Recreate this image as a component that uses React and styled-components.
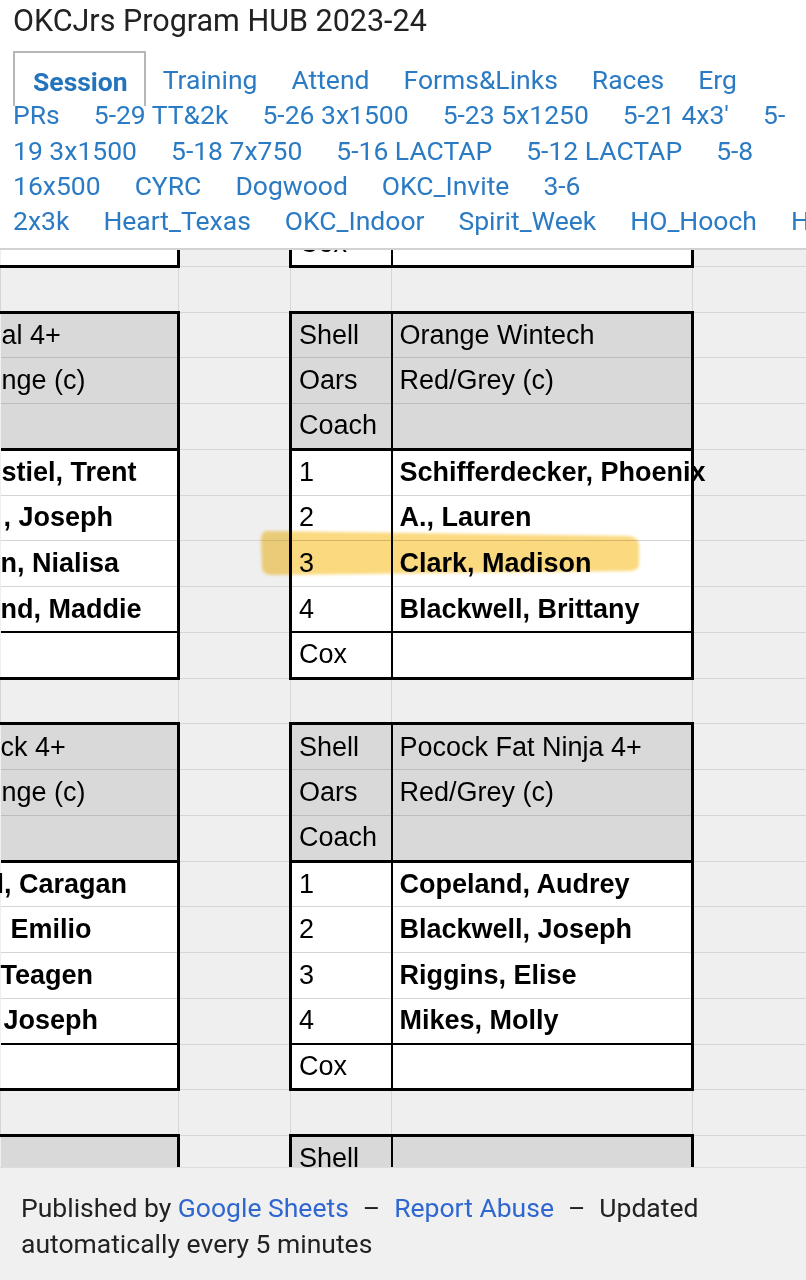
import React from 'react';
import styled, { createGlobalStyle } from 'styled-components';

const GlobalStyle = createGlobalStyle`
  html, body {
    margin: 0;
    padding: 0;
    background: #fff;
    overflow: hidden;
  }
`;

const tabLines = [
  [
    { t: 'Session', active: true },
    { t: 'Training' },
    { t: 'Attend' },
    { t: 'Forms&Links' },
    { t: 'Races' },
    { t: 'Erg' },
  ],
  [
    { t: 'PRs', cont: true },
    { t: '5-29 TT&2k' },
    { t: '5-26 3x1500' },
    { t: '5-23 5x1250' },
    { t: "5-21 4x3'" },
    { t: '5-' },
  ],
  [
    { t: '19 3x1500', cont: true },
    { t: '5-18 7x750' },
    { t: '5-16 LACTAP' },
    { t: '5-12 LACTAP' },
    { t: '5-8' },
  ],
  [
    { t: '16x500', cont: true },
    { t: 'CYRC' },
    { t: 'Dogwood' },
    { t: 'OKC_Invite' },
    { t: '3-6' },
  ],
  [
    { t: '2x3k', cont: true },
    { t: 'Heart_Texas' },
    { t: 'OKC_Indoor' },
    { t: 'Spirit_Week' },
    { t: 'HO_Hooch' },
    { t: 'HOCR' },
  ],
];

// sheet rows, top one is the tail of the previous boat
const rows = [
  { kind: 'cox', c: 'Cox', partial: true },
  { kind: 'gap' },
  { kind: 'shell', a: 'al 4+', ai: 1, c: 'Shell', d: 'Orange Wintech' },
  { kind: 'oars', a: 'nge (c)', ai: 1, c: 'Oars', d: 'Red/Grey (c)' },
  { kind: 'coach', c: 'Coach' },
  { kind: 'seat', a: 'stiel, Trent', ai: 1, c: '1', d: 'Schifferdecker, Phoenix' },
  { kind: 'seat', a: ', Joseph', ai: 3, c: '2', d: 'A., Lauren' },
  { kind: 'seat', a: 'n, Nialisa', ai: 0, c: '3', d: 'Clark, Madison' },
  { kind: 'seat', a: 'nd, Maddie', ai: 0, c: '4', d: 'Blackwell, Brittany' },
  { kind: 'cox', c: 'Cox' },
  { kind: 'gap' },
  { kind: 'shell', a: 'ck 4+', ai: 0, c: 'Shell', d: 'Pocock Fat Ninja 4+' },
  { kind: 'oars', a: 'nge (c)', ai: 1, c: 'Oars', d: 'Red/Grey (c)' },
  { kind: 'coach', c: 'Coach' },
  { kind: 'seat', a: 'l, Caragan', ai: -4, c: '1', d: 'Copeland, Audrey' },
  { kind: 'seat', a: 'Emilio', ai: 10, c: '2', d: 'Blackwell, Joseph' },
  { kind: 'seat', a: 'Teagen', ai: 0, c: '3', d: 'Riggins, Elise' },
  { kind: 'seat', a: 'Joseph', ai: 3, c: '4', d: 'Mikes, Molly' },
  { kind: 'cox', c: 'Cox' },
  { kind: 'gap' },
  { kind: 'shell', c: 'Shell' },
  { kind: 'oars', c: 'Oars' },
];

const HEAD = ['shell', 'oars', 'coach'];

const App = () => {
  const blockCell = (row, col) => {
    const fill = HEAD.includes(row.kind) ? 'head' : 'white';
    return {
      $fill: fill,
      $top: row.kind === 'shell' ? 'thick' : row.kind === 'cox' ? 'black' : null,
      $bottom: row.kind === 'coach' || row.kind === 'cox' ? 'thick' : null,
      $left: col === 'c' ? 'thick' : null,
      $right: col === 'c' ? 'black' : 'thick',
      $bold: row.kind === 'seat' && col !== 'c',
    };
  };

  return (
    <Page>
      <GlobalStyle />
      <Title>OKCJrs Program HUB 2023-24</Title>

      <Tabs>
        {tabLines.map((line, i) => (
          <TabLine key={i}>
            {line.map((tab) =>
              tab.active ? (
                <ActiveTab key={tab.t}>{tab.t}</ActiveTab>
              ) : (
                <Tab key={tab.t} $cont={tab.cont}>{tab.t}</Tab>
              )
            )}
          </TabLine>
        ))}
      </Tabs>

      <SheetView>
        <Grid>
          <colgroup>
            <Col $w={178} />
            <Col $w={112} />
            <Col $w={101} />
            <Col $w={301} />
            <Col $w={130} />
          </colgroup>
          <tbody>
            {rows.map((row, i) => (
              <Row key={i}>
                {row.kind === 'gap' ? (
                  <>
                    <Cell $fill="gap" />
                    <Cell $fill="gap" />
                    <Cell $fill="gap" />
                    <Cell $fill="gap" />
                    <Cell $fill="gap" />
                  </>
                ) : (
                  <>
                    <Cell {...blockCell(row, 'a')} $edge $indent={row.ai || 0}>{row.a}</Cell>
                    <Cell $fill="gap" />
                    <Cell {...blockCell(row, 'c')}>{row.c}</Cell>
                    <Cell {...blockCell(row, 'd')}>{row.d}</Cell>
                    <Cell $fill="gap" />
                  </>
                )}
              </Row>
            ))}
          </tbody>
        </Grid>

        <Marker viewBox="0 0 392 50" width="392" height="50">
          <defs>
            <filter id="soft" x="-5%" y="-20%" width="110%" height="140%">
              <feGaussianBlur stdDeviation="1.4" />
            </filter>
          </defs>
          <path
            d="M9 2 L370 7 Q381 8 381 16 L381 35 Q381 42 371 42 L14 46 Q5 46 4 39 L3 11 Q3 2 9 2 Z"
            fill="#fad97f"
            filter="url(#soft)"
          />
        </Marker>
      </SheetView>

      <Footer>
        Published by <FooterLink>Google Sheets</FooterLink>
        <Dash>–</Dash>
        <FooterLink>Report Abuse</FooterLink>
        <Dash>–</Dash>
        Updated automatically every 5 minutes
      </Footer>
    </Page>
  );
};

export default App;

const Page = styled.div`
  width: 806px;
  height: 1280px;
  display: flex;
  flex-direction: column;
  overflow: hidden;
  font-family: Roboto, 'Noto Sans', sans-serif;
`;

const Title = styled.div`
  height: 42px;
  line-height: 42px;
  padding-left: 13px;
  font-size: 30.5px;
  color: #222;
  white-space: nowrap;
`;

const Tabs = styled.nav`
  box-sizing: border-box;
  height: 208px;
  padding: 20px 0 0 13px;
  border-bottom: 2px solid #d2d2d2;
  flex-shrink: 0;
  overflow: hidden;
`;

const TabLine = styled.div`
  display: flex;
  align-items: flex-start;
  height: 35.25px;
  white-space: nowrap;
`;

const Tab = styled.span`
  padding: 0 17px 0 ${(p) => (p.$cont ? '0' : '17px')};
  font-size: 26.5px;
  line-height: 35.25px;
  color: #2b7bc4;
`;

const ActiveTab = styled.span`
  box-sizing: border-box;
  height: 55px;
  margin-top: -11px;
  padding: 11px 16px 0 18px;
  border: 2px solid #b7b7b7;
  border-bottom: none;
  font-size: 26.5px;
  font-weight: 700;
  line-height: 35.25px;
  color: #2474bd;
  position: relative;
  z-index: 1;
`;

const SheetView = styled.div`
  position: relative;
  flex: 1 1 auto;
  overflow: hidden;
  background: #efefef;
`;

const Grid = styled.table`
  border-collapse: collapse;
  table-layout: fixed;
  width: 822px;
  margin-top: -30.5px;
  font-family: 'Liberation Sans', Arial, sans-serif;
  font-size: 27px;
  color: #000;
`;

const Col = styled.col`
  width: ${(p) => p.$w}px;
`;

const Row = styled.tr`
  height: 45.75px;
`;

const line = (v, fill) => {
  if (v === 'thick') return '3px solid #000';
  if (v === 'black') return '2px solid #000';
  if (fill === 'head') return '1px solid #bdbdbd';
  if (fill === 'white') return '1px solid #d5d5d5';
  return '1px solid #d6d6d6';
};

const Cell = styled.td`
  box-sizing: border-box;
  padding: 0 0 0 ${(p) => (p.$edge ? 0 : 7)}px;
  text-indent: ${(p) => p.$indent || 0}px;
  white-space: nowrap;
  overflow: visible;
  vertical-align: middle;
  line-height: 31px;
  font-weight: ${(p) => (p.$bold ? 700 : 400)};
  background: ${(p) => (p.$fill === 'head' ? '#d9d9d9' : p.$fill === 'white' ? '#fff' : '#efefef')};
  border-top: ${(p) => line(p.$top, p.$fill)};
  border-bottom: ${(p) => line(p.$bottom, p.$fill)};
  border-left: ${(p) => (p.$edge ? 'none' : line(p.$left, p.$fill))};
  border-right: ${(p) => line(p.$right, p.$fill)};
`;

const Marker = styled.svg`
  position: absolute;
  left: 258px;
  top: 279px;
  mix-blend-mode: multiply;
  pointer-events: none;
`;

const Footer = styled.footer`
  box-sizing: border-box;
  height: 113px;
  flex-shrink: 0;
  padding: 22px 21px 0 21px;
  background: #f0f0f0;
  border-top: 1px solid #dcdcdc;
  font-size: 26.5px;
  line-height: 36px;
  color: #222;
`;

const FooterLink = styled.a`
  color: #2f66cf;
  text-decoration: none;
`;

const Dash = styled.span`
  margin: 0 14px;
`;
